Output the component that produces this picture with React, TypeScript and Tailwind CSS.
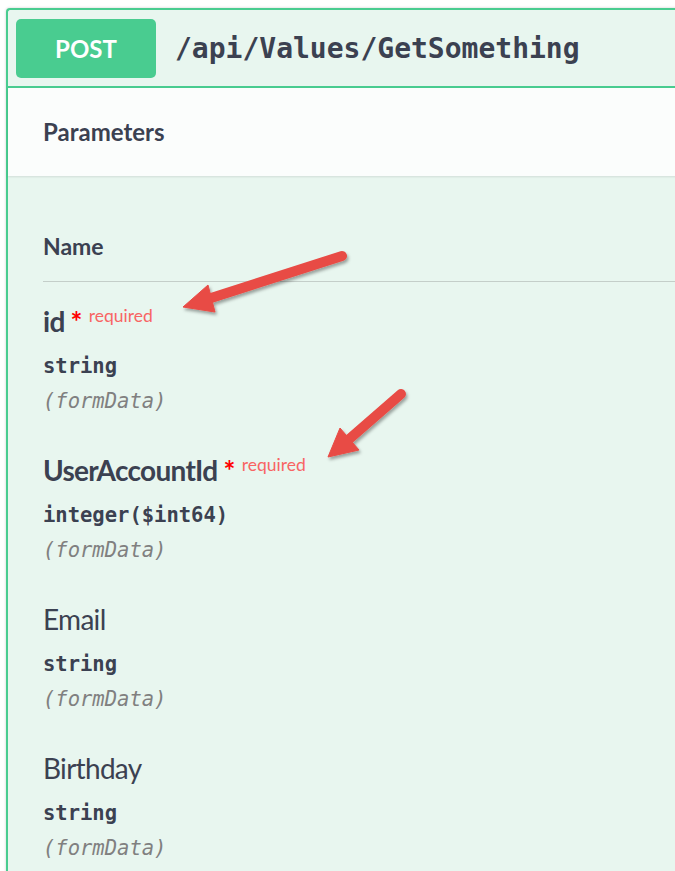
import React from "react";

type Param = {
  name: string;
  type: string;
  required: boolean;
};

const params: Param[] = [
  { name: "id", type: "string", required: true },
  { name: "UserAccountId", type: "integer($int64)", required: true },
  { name: "Email", type: "string", required: false },
  { name: "Birthday", type: "string", required: false },
];

const sans = "font-['Lato','Open_Sans',sans-serif]";
const mono = "font-['DejaVu_Sans_Mono','Liberation_Mono',monospace]";

const ParamRow: React.FC<{ p: Param }> = ({ p }) => (
  <div className="pb-[35px]">
    {/* name */}
    <div className={`${sans} h-[40px] leading-[40px] text-[28px] tracking-[-0.7px] text-[#3b4151] whitespace-nowrap ${p.required ? "font-bold" : "font-normal"}`}>
      {p.name}
      {p.required && (
        <>
          <span className="text-[#ff0000] ml-[6px]">*</span>
          <span className="relative -top-[10px] pl-[7px] text-[17.5px] tracking-normal font-normal text-[#f86464]">required</span>
        </>
      )}
    </div>
    {/* type */}
    <div className={`${mono} mt-[11px] h-[28px] leading-[28px] text-[20.5px] font-bold text-[#3b4151]`}>{p.type}</div>
    {/* in */}
    <div className={`${mono} mt-[7px] h-[28px] leading-[28px] text-[20.5px] italic text-[#808080]`}>(formData)</div>
  </div>
);

// red annotation arrows drawn over the screenshot
const Arrows: React.FC = () => (
  <svg className="absolute inset-0 pointer-events-none" width={675} height={871} viewBox="0 0 675 871">
    <defs>
      <filter id="sh" x="-20%" y="-20%" width="140%" height="140%">
        <feDropShadow dx="1.5" dy="2.5" stdDeviation="1.5" floodColor="#000" floodOpacity="0.35" />
      </filter>
    </defs>
    <g filter="url(#sh)" fill="#e84b45" stroke="#e84b45">
      <line x1="342" y1="256" x2="208" y2="299" strokeWidth="10" strokeLinecap="round" />
      <polygon points="183,307 208,285 215,312" strokeWidth="1" strokeLinejoin="round" />
      <line x1="401" y1="394" x2="347" y2="441" strokeWidth="10" strokeLinecap="round" />
      <polygon points="328,457 340,428 359,450" strokeWidth="1" strokeLinejoin="round" />
    </g>
  </svg>
);

export default function App() {
  return (
    <div className="relative h-[871px] w-[675px] overflow-hidden bg-white">
      <div className="ml-[6px] mt-[8px] w-[720px] border-2 border-r-0 border-b-0 border-[#49cc90] rounded-tl-[4px] bg-[#e8f6ef] shadow-[0_0_3px_rgba(0,0,0,0.19)]">
        {/* summary */}
        <div className="flex items-center pl-[8px] pt-[9px] pb-[8px] border-b-2 border-[#49cc90]">
          <div className={`${sans} w-[140px] h-[59px] rounded-[5px] bg-[#49cc90] flex items-center justify-center text-white font-bold text-[24px]`}>
            POST
          </div>
          <div className={`${mono} ml-[19px] text-[28px] font-bold text-[#3b4151]`}>/api/Values/GetSomething</div>
        </div>

        {/* section header */}
        <div className="h-[88px] flex items-center pl-[35px] bg-[#fbfdfc] shadow-[0_1px_2px_rgba(0,0,0,0.1)]">
          <h4 className={`${sans} text-[24px] font-bold text-[#3b4151]`}>Parameters</h4>
        </div>

        {/* table */}
        <div className="pl-[35px] pt-[55px] h-[800px]">
          <div className="pb-[20px] border-b border-[#c4cec9]">
            <div className={`${sans} h-[30px] leading-[30px] text-[23px] font-bold text-[#3b4151]`}>Name</div>
          </div>
          <div className="pt-[19px]">
            {params.map((p) => (
              <ParamRow key={p.name} p={p} />
            ))}
          </div>
        </div>
      </div>
      <Arrows />
    </div>
  );
}
